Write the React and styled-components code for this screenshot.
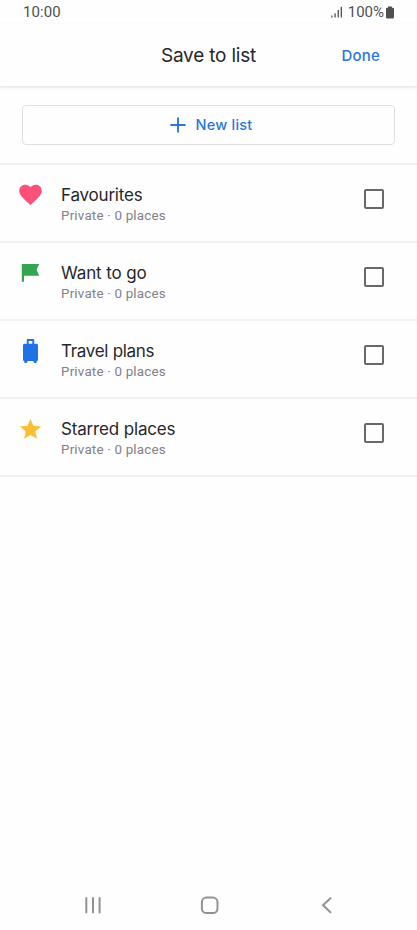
import React, { useState } from 'react'
import styled, { createGlobalStyle } from 'styled-components'

const GlobalStyle = createGlobalStyle`
  * {
    box-sizing: border-box;
  }

  body {
    margin: 0;
    background: #fefefe;
    font-family: Roboto, "Liberation Sans", sans-serif;
  }

  button {
    font-family: inherit;
    cursor: pointer;
  }
`

const Screen = styled.div`
  display: flex;
  flex-direction: column;
  height: 930px;
  width: 100%;
  overflow: hidden;
  background: #fefefe;
`

/* status bar */
const StatusBar = styled.div`
  display: flex;
  justify-content: space-between;
  align-items: center;
  height: 24px;
  padding: 0 22px 0 23px;
  color: #505050;
  font-size: 15px;
`

const Time = styled.span`
  letter-spacing: 0.1px;
`

const StatusRight = styled.div`
  display: flex;
  align-items: center;

  span {
    margin: 0 1px 0 5px;
  }
`

/* header with title and Done button */
const Header = styled.header`
  display: grid;
  grid-template-columns: 1fr auto 1fr;
  align-items: center;
  height: 63px;
  padding: 0 37px;
  border-bottom: 1px solid #ebebeb;
  box-shadow: 0 1px 3px rgba(0, 0, 0, 0.08);
`

const Title = styled.h1`
  grid-column: 2;
  margin: 0;
  color: #27272a;
  font-family: Inter, sans-serif;
  font-size: 19px;
  font-weight: 400;
  letter-spacing: -0.2px;
`

const Done = styled.button`
  justify-self: end;
  padding: 0;
  border: 0;
  background: none;
  color: #2b76d9;
  && {
    font-family: Inter, sans-serif;
  }
  font-size: 15px;
  font-weight: 500;
  letter-spacing: 0.2px;
`

const NewListArea = styled.div`
  height: 78px;
  padding: 18px 22px 0 22px;
  border-bottom: 2px solid #f1f1f2;
`

const NewList = styled.button`
  display: flex;
  justify-content: center;
  align-items: center;
  gap: 10px;
  width: 100%;
  height: 40px;
  padding: 0 0 1px 5px;
  border: 1.5px solid #e0e0e1;
  border-radius: 4px;
  background: #fefefe;
  color: #2b76d9;
  && {
    font-family: Inter, sans-serif;
  }
  font-size: 14.5px;
  font-weight: 500;
  letter-spacing: 0.2px;
`

/* lists */
const Lists = styled.ul`
  flex: 1;
  margin: 0;
  padding: 0;
  list-style: none;
`

const Row = styled.li`
  display: flex;
  align-items: flex-start;
  height: 78px;
  padding: 16px 33px 0 17px;
  border-bottom: 2px solid #f1f1f2;
`

const Texts = styled.div`
  flex: 1;
  margin: 3px 0 0 17px;
`

const Name = styled.div`
  color: #27272a;
  font-family: Inter, sans-serif;
  font-size: 17px;
  line-height: 22px;
  letter-spacing: ${(props) => props.$spacing}px;
`

const Detail = styled.div`
  color: #808186;
  font-size: 13.4px;
  line-height: 20px;
  letter-spacing: 0.19px;
`

const Checkbox = styled.button`
  width: 20px;
  height: 20px;
  margin-top: 8px;
  padding: 0;
  border: 2px solid #68686c;
  border-radius: 2px;
  background: ${(props) => (props.$checked ? '#68686c' : '#fefefe')};
`

/* android navigation */
const NavBar = styled.nav`
  display: flex;
  justify-content: space-between;
  align-items: center;
  height: 50px;
  padding: 0 81px;
`

const SignalIcon = () => (
  <svg width="12" height="12" viewBox="0 0 12 12" fill="#505050">
    <rect x="0.2" y="9.5" width="1.3" height="2" />
    <rect x="3.4" y="7.3" width="1.3" height="4.2" />
    <rect x="6.6" y="4" width="1.3" height="7.5" />
    <rect x="9.7" y="0.8" width="1.3" height="10.7" />
  </svg>
)

const BatteryIcon = () => (
  <svg width="10" height="13" viewBox="0 0 10 13" fill="#505050">
    <path d="M3 .6h4v1.2h.8A1.2 1.2 0 0 1 9 3v8.2a1.2 1.2 0 0 1-1.2 1.2H2.2A1.2 1.2 0 0 1 1 11.2V3a1.2 1.2 0 0 1 1.2-1.2H3z" />
  </svg>
)

const PlusIcon = () => (
  <svg width="16" height="16" viewBox="0 0 16 16" stroke="#2b76d9" strokeWidth="1.9">
    <path d="M8 .4v15.2M.4 8h15.2" />
  </svg>
)

const HeartIcon = () => (
  <svg width="27" height="27" viewBox="0 0 27 27" fill="#fb5178">
    <path d="M13.5 23.9l-1.6-1.4C6.1 17.3 2.2 13.9 2.2 9.7c0-3.4 2.7-6 6.1-6 2 0 3.9.9 5.2 2.4 1.3-1.5 3.2-2.4 5.2-2.4 3.4 0 6.1 2.6 6.1 6 0 4.2-3.9 7.6-9.7 12.8z" />
  </svg>
)

const FlagIcon = () => (
  <svg width="27" height="27" viewBox="0 0 27 27" fill="#34a44f">
    <path d="M4.800 5H22.300L19.500 10.700L22.300 16.700H7V22.800H4.800z" />
  </svg>
)

const SuitcaseIcon = () => (
  <svg width="27" height="27" viewBox="0 0 27 27" fill="#1f72e6">
    <path
      fillRule="evenodd"
      d="M10.800 2h5.400q1 0 1 1V6.700h2.300q1.500 0 1.500 1.500v14.300q0 1.500-1.300 1.600v1.200q0 .7-.7.7h-1.300q-.7 0-.9-.7l-.5-1.200h-5.600l-.5 1.200q-.2.7-.9.7H8q-.7 0-.7-.7v-1.200Q6 24 6 22.500V8.200Q6 6.700 7.500 6.700h2.300V3q0-1 1-1zM11.700 3.900V6.700h3.600V3.900z"
    />
  </svg>
)

const StarIcon = () => (
  <svg width="27" height="27" viewBox="0 0 27 27" fill="#fbbf33">
    <path d="M13.5 3.700l2.900 7 7.700.7-5.900 5 1.800 7.400-6.500-3.900L7 23.800l1.800-7.400-5.900-5 7.700-.7z" />
  </svg>
)

const lists = [
  { name: 'Favourites', Icon: HeartIcon, spacing: -0.2 },
  { name: 'Want to go', Icon: FlagIcon, spacing: -0.12 },
  { name: 'Travel plans', Icon: SuitcaseIcon, spacing: -0.3 },
  { name: 'Starred places', Icon: StarIcon, spacing: -0.16 },
]

const ListRow = ({ name, Icon, spacing }) => {
  const [checked, setChecked] = useState(false)

  return (
    <Row>
      <Icon />
      <Texts>
        <Name $spacing={spacing}>{name}</Name>
        <Detail>Private · 0 places</Detail>
      </Texts>
      <Checkbox
        role="checkbox"
        aria-label={name}
        aria-checked={checked}
        $checked={checked}
        onClick={() => setChecked(!checked)}
      />
    </Row>
  )
}

const App = () => {
  return (
    <Screen>
      <GlobalStyle />
      <StatusBar>
        <Time>10:00</Time>
        <StatusRight>
          <SignalIcon />
          <span>100%</span>
          <BatteryIcon />
        </StatusRight>
      </StatusBar>

      <Header>
        <Title>Save to list</Title>
        <Done>Done</Done>
      </Header>

      <NewListArea>
        <NewList>
          <PlusIcon />
          New list
        </NewList>
      </NewListArea>

      <Lists>
        {lists.map((list) => (
          <ListRow key={list.name} {...list} />
        ))}
      </Lists>

      <NavBar>
        <svg width="24" height="24" viewBox="0 0 24 24" stroke="#929292" strokeWidth="2" strokeLinecap="round">
          <path d="M5.300 5v14.400M12 5v14.400M18.600 5v14.400" />
        </svg>
        <svg width="24" height="24" viewBox="0 0 24 24" fill="none" stroke="#929292" strokeWidth="2">
          <rect x="4.900" y="4.500" width="15.600" height="15.600" rx="4.700" />
        </svg>
        <svg width="24" height="24" viewBox="0 0 24 24" fill="none" stroke="#929292" strokeWidth="2" strokeLinecap="round">
          <path d="M18.500 5.200L11 12.200l7.500 7" />
        </svg>
      </NavBar>
    </Screen>
  )
}

export default App
